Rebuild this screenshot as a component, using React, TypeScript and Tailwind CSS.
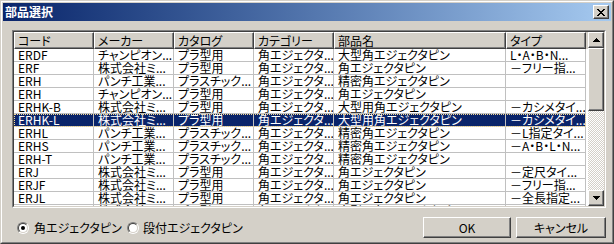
import React from "react";

const HEADERS = ["コード", "メーカー", "カタログ", "カテゴリー", "部品名", "タイプ"];
const COL_W = ["w-[80px]", "w-[80px]", "w-[80px]", "w-[80px]", "w-[172px]", "w-[80px]"];

const ROWS: string[][] = [
  ["ERDF", "チャンピオン...", "プラ型用", "角エジェクタ...", "大型角エジェクタピン", "L・A・B・N..."],
  ["ERF", "株式会社ミ...", "プラ型用", "角エジェクタ...", "角エジェクタピン", "－フリー指..."],
  ["ERH", "パンチ工業...", "プラスチック...", "角エジェクタ...", "精密角エジェクタピン", ""],
  ["ERH", "チャンピオン...", "プラ型用", "角エジェクタ...", "角エジェクタピン", ""],
  ["ERHK-B", "株式会社ミ...", "プラ型用", "角エジェクタ...", "大型用角エジェクタピン", "－カシメタイ..."],
  ["ERHK-L", "株式会社ミ...", "プラ型用", "角エジェクタ...", "大型用角エジェクタピン", "－カシメタイ..."],
  ["ERHL", "パンチ工業...", "プラスチック...", "角エジェクタ...", "精密角エジェクタピン", "－L指定タイ..."],
  ["ERHS", "パンチ工業...", "プラスチック...", "角エジェクタ...", "精密角エジェクタピン", "－A・B・L・N..."],
  ["ERH-T", "パンチ工業...", "プラスチック...", "角エジェクタ...", "精密角エジェクタピン", ""],
  ["ERJ", "株式会社ミ...", "プラ型用", "角エジェクタ...", "角エジェクタピン", "－定尺タイ..."],
  ["ERJF", "株式会社ミ...", "プラ型用", "角エジェクタ...", "角エジェクタピン", "－フリー指..."],
  ["ERJL", "株式会社ミ...", "プラ型用", "角エジェクタ...", "角エジェクタピン", "－全長指定..."],
  ["ERJK", "株式会社ミ...", "プラ型用", "角エジェクタ...", "大型用角エジェクタピン", ""],
];
const SELECTED = 5;

// classic raised 3D edge
const RAISED =
  "border border-t-white border-l-white border-b-[#404040] border-r-[#404040] shadow-[inset_-1px_-1px_#808080] bg-[#d4d0c8]";

function Arrow({ down }: { down?: boolean }) {
  return (
    <svg width="7" height="4" viewBox="0 0 7 4" shapeRendering="crispEdges">
      <path
        d={down ? "M0 0h7v1H0zM1 1h5v1H1zM2 2h3v1H2zM3 3h1v1H3z" : "M3 0h1v1H3zM2 1h3v1H2zM1 2h5v1H1zM0 3h7v1H0z"}
        fill="#000"
      />
    </svg>
  );
}

function Radio({ checked }: { checked?: boolean }) {
  return (
    <span className="flex h-[12px] w-[12px] shrink-0 rounded-full border border-t-[#808080] border-l-[#808080] border-b-white border-r-white">
      <span className="flex flex-1 items-center justify-center rounded-full border border-t-[#404040] border-l-[#404040] border-b-[#d4d0c8] border-r-[#d4d0c8] bg-white">
        {checked && <span className="h-[4px] w-[4px] rounded-full bg-black" />}
      </span>
    </span>
  );
}

export default function App() {
  return (
    <div className="h-[244px] w-[614px] border border-t-[#d4d0c8] border-l-[#d4d0c8] border-b-[#404040] border-r-[#404040] bg-[#d4d0c8] font-['Noto_Sans_CJK_JP',sans-serif] text-[12px] leading-[12px] text-black [font-feature-settings:'palt']">
      <div className="flex h-full flex-col border border-t-white border-l-white border-b-[#808080] border-r-[#808080] p-px">
        {/* title bar */}
        <div className="flex h-[18px] items-center bg-linear-to-r from-[#0a246a] to-[#a6caf0] pl-[2px] pr-[2px]">
          <span className="font-bold text-white">部品選択</span>
          <button type="button" className={`ml-auto flex h-[14px] w-[16px] items-center justify-center ${RAISED}`}>
            <svg width="8" height="7" viewBox="0 0 8 7" shapeRendering="crispEdges">
              <path
                d="M0 0h2v1H0zM6 0h2v1H6zM1 1h2v1H1zM5 1h2v1H5zM2 2h4v1H2zM3 3h2v1H3zM2 4h4v1H2zM1 5h2v1H1zM5 5h2v1H5zM0 6h2v1H0zM6 6h2v1H6z"
                fill="#000"
              />
            </svg>
          </button>
        </div>

        <div className="flex flex-1 flex-col pl-[9px] pr-[5px] pt-[9px]">
          {/* list view */}
          <div className="h-[178px] border border-t-[#808080] border-l-[#808080] border-b-white border-r-white">
            <div className="flex h-full border border-t-[#404040] border-l-[#404040] border-b-[#d4d0c8] border-r-[#d4d0c8] bg-white">
              <div className="flex w-[574px] flex-col overflow-hidden">
                <div className="flex h-[17px] shrink-0 bg-[#d4d0c8]">
                  {HEADERS.map((h, i) => (
                    <div key={i} className={`${COL_W[i]} flex items-center pl-[3px] ${RAISED}`}>
                      {h}
                    </div>
                  ))}
                </div>
                {ROWS.map((row, r) => (
                  <div
                    key={r}
                    className={`flex h-[13px] w-[572px] shrink-0 ${
                      r === SELECTED
                        ? "bg-[#0a246a] text-white outline-1 -outline-offset-1 outline-dotted outline-[#f5db95]"
                        : ""
                    }`}
                  >
                    {row.map((cell, c) => (
                      <div
                        key={c}
                        className={`${COL_W[c]} flex items-center overflow-hidden whitespace-nowrap border-b border-r border-[#c0c0c0] pl-[4px]`}
                      >
                        {cell}
                      </div>
                    ))}
                  </div>
                ))}
              </div>
              {/* scrollbar */}
              <div className="flex w-[16px] flex-col">
                <div className={`flex h-[16px] items-center justify-center ${RAISED}`}>
                  <Arrow />
                </div>
                <div className={`h-[63px] ${RAISED}`} />
                <div className="flex-1 bg-[repeating-conic-gradient(#ffffff_0_25%,#d4d0c8_0_50%)] [background-size:2px_2px]" />
                <div className={`flex h-[16px] items-center justify-center ${RAISED}`}>
                  <Arrow down />
                </div>
              </div>
            </div>
          </div>

          {/* bottom row */}
          <div className="flex items-center pt-[9px]">
            <label className="ml-[5px] flex w-[110px] items-center">
              <Radio checked />
              <span className="ml-[5px]">角エジェクタピン</span>
            </label>
            <label className="flex items-center">
              <Radio />
              <span className="ml-[4px]">段付エジェクタピン</span>
            </label>
            <div className="ml-auto flex gap-[5px]">
              <button type="button" className={`h-[21px] w-[88px] ${RAISED}`}>
                OK
              </button>
              <button type="button" className={`h-[21px] w-[90px] ${RAISED}`}>
                キャンセル
              </button>
            </div>
          </div>
        </div>
      </div>
    </div>
  );
}
